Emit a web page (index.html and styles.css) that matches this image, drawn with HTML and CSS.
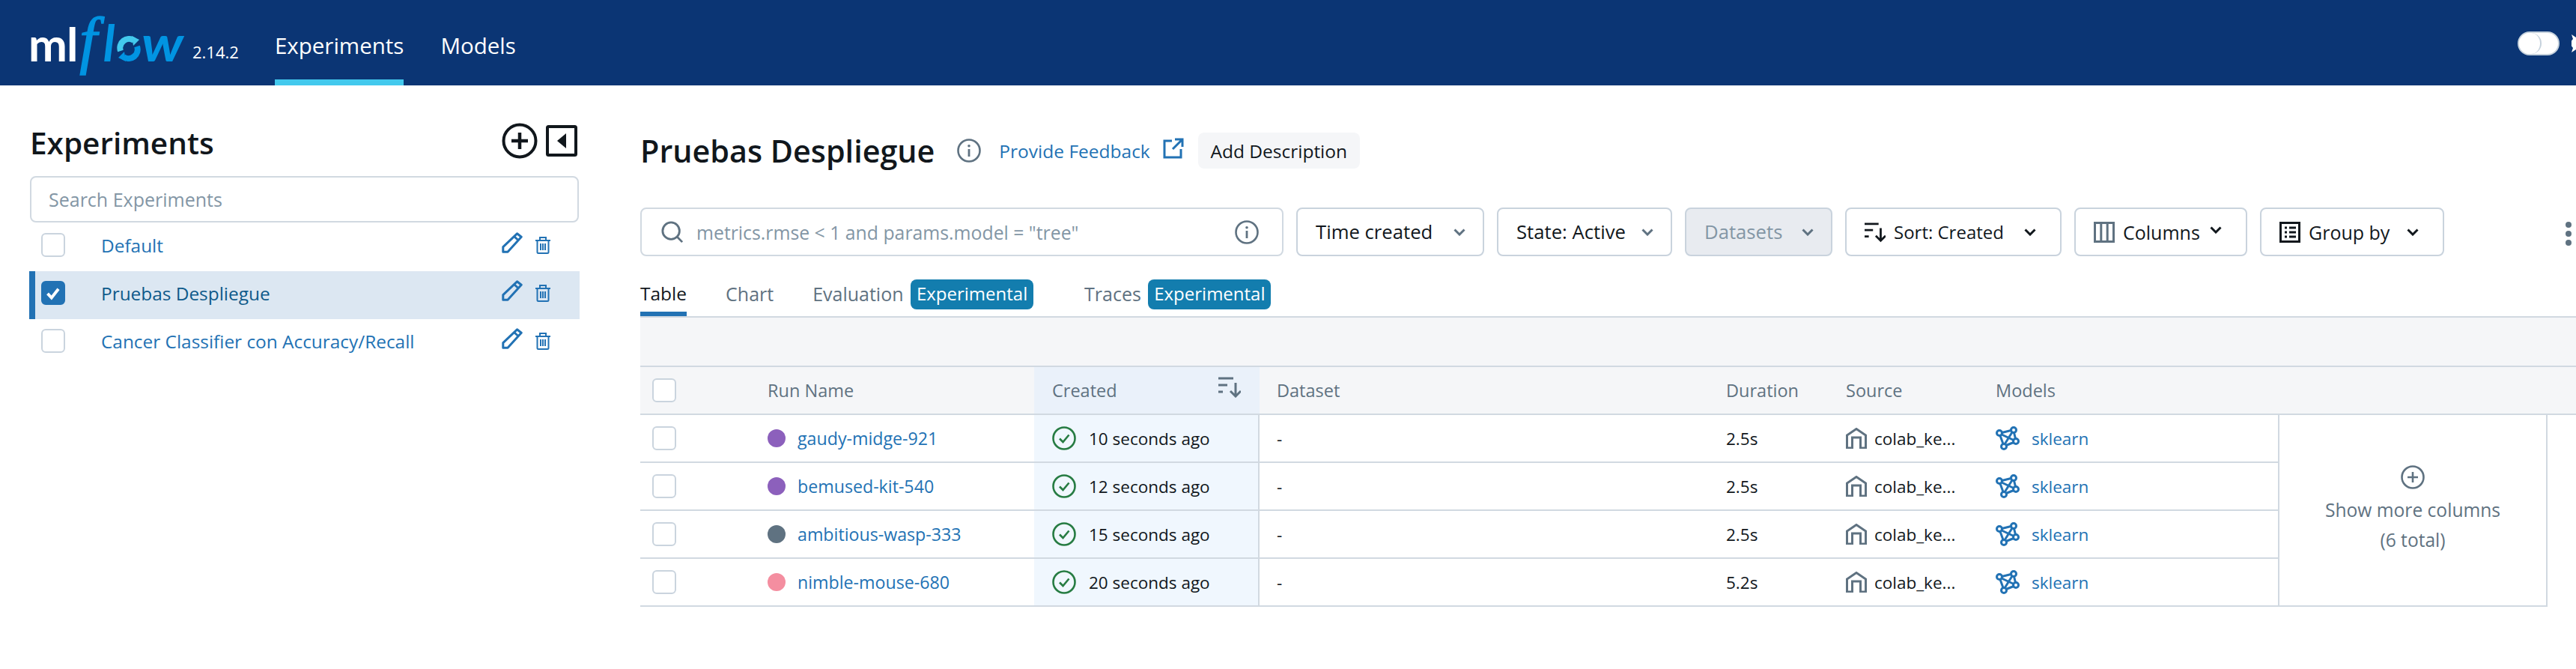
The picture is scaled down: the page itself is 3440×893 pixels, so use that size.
FILE: index.html
```html
<!DOCTYPE html>
<html lang="en">
<head>
  <meta charset="UTF-8">
  <title>MLflow Experiments</title>
  <link rel="stylesheet" href="styles.css">
</head>
<body>
  <svg class="defs" width="0" height="0">
    <defs>
      <symbol id="i-pencil" viewBox="0 0 28 28"><path d="M1.800 26.200v-6.500L20.500 1.800l5.700 4.500L8 26.200zM17 6l6 5.500" fill="none" stroke="currentColor" stroke-width="3" stroke-linejoin="round"/></symbol>
      <symbol id="i-trash" viewBox="0 0 22 24"><path d="M1 6h20M7 6V2h8v4M3.500 6v15.500a1.500 1.500 0 0 0 1.500 1.500h12a1.500 1.500 0 0 0 1.500-1.500V6M8 10v9M11 10v9M14 10v9" fill="none" stroke="currentColor" stroke-width="2"/></symbol>
      <symbol id="i-info" viewBox="0 0 32 32"><circle cx="16" cy="16" r="14.500" fill="none" stroke="currentColor" stroke-width="2.600"/><circle cx="16" cy="9.800" r="1.800" fill="currentColor"/><path d="M16 14v10" stroke="currentColor" stroke-width="2.800"/></symbol>
      <symbol id="i-chev" viewBox="0 0 16 10"><path d="M1.500 1.500 8 8l6.500-6.500" fill="none" stroke="currentColor" stroke-width="3"/></symbol>
      <symbol id="i-sort" viewBox="0 0 30 28"><path d="M0 2h20M0 11h12M0 20h6M23 8v18M16 19l7 7 7-7" fill="none" stroke="currentColor" stroke-width="3"/></symbol>
      <symbol id="i-ok" viewBox="0 0 32 32"><circle cx="16" cy="16" r="14.500" fill="none" stroke="#277c43" stroke-width="2.600"/><path d="M10 16.500l4.500 4.500 8-9.500" fill="none" stroke="#277c43" stroke-width="2.600"/></symbol>
      <symbol id="i-home" viewBox="0 0 28 28"><path d="M1.500 27V10L14 1.500 26.500 10v17h-7V13h-11v14z" fill="none" stroke="currentColor" stroke-width="3"/></symbol>
      <symbol id="i-model" viewBox="0 0 32 32"><g fill="none" stroke="currentColor" stroke-width="3"><circle cx="5" cy="9" r="3.500"/><circle cx="24" cy="5" r="3.500"/><circle cx="27" cy="20" r="3.500"/><circle cx="11" cy="27" r="3.500"/><path d="M8.500 8.500l12-3M8 11l16 7.500M6 12.500l4 11M24.500 8.500l2 8M14 25.500l10-4M22 8 12 24"/></g></symbol>
    </defs>
  </svg>

  <header class="topbar">
    <div class="logo">
      <span class="logo-ml">ml</span><span class="logo-f">f</span><span class="logo-l">l</span>
      <svg class="logo-o" viewBox="0 0 34 34"><path d="M6 20A12 12 0 0 1 24 6" fill="none" stroke="#43c9ed" stroke-width="8"/><path d="M28 14A12 12 0 0 1 10 28" fill="none" stroke="#0194e2" stroke-width="8"/><path d="M21 0l10 5-8 8z" fill="#43c9ed"/><path d="M13 34 3 29l8-8z" fill="#0194e2"/></svg>
      <span class="logo-w">w</span>
    </div>
    <span class="version">2.14.2</span>
    <nav class="topnav">
      <a class="topnav-item active">Experiments</a>
      <a class="topnav-item">Models</a>
    </nav>
    <div class="theme-toggle"><span class="knob"></span></div>
    <svg class="sun" viewBox="0 0 24 24"><path d="M0 0l6 4 6-4 1 6 7 0-3 6 3 6-7 0-1 6-6-4-6 4 2-6-5-6 5-6z" fill="#fff"/></svg>
  </header>

  <div class="page">
    <aside class="sidebar">
      <div class="sidebar-head">
        <h2>Experiments</h2>
        <svg class="icon-add" viewBox="0 0 48 48"><circle cx="24" cy="24" r="21.500" fill="none" stroke="currentColor" stroke-width="4"/><path d="M24 13v22M13 24h22" stroke="currentColor" stroke-width="4.500"/></svg>
        <svg class="icon-collapse" viewBox="0 0 42 42"><rect x="2" y="2" width="38" height="38" rx="1.500" fill="none" stroke="currentColor" stroke-width="4"/><path d="M27 11v20L15 21z" fill="currentColor"/></svg>
      </div>
      <div class="exp-search">Search Experiments</div>
      <ul class="exp-list">
        <li class="exp-row">
          <span class="checkbox"></span>
          <span class="exp-name">Default</span>
          <svg class="icon-pencil"><use href="#i-pencil"/></svg>
          <svg class="icon-trash"><use href="#i-trash"/></svg>
        </li>
        <li class="exp-row selected">
          <span class="checkbox checked"><svg viewBox="0 0 32 32"><path d="M7.500 17l6 6.500L24 10" fill="none" stroke="#fff" stroke-width="4.500"/></svg></span>
          <span class="exp-name">Pruebas Despliegue</span>
          <svg class="icon-pencil"><use href="#i-pencil"/></svg>
          <svg class="icon-trash"><use href="#i-trash"/></svg>
        </li>
        <li class="exp-row">
          <span class="checkbox"></span>
          <span class="exp-name">Cancer Classifier con Accuracy/Recall</span>
          <svg class="icon-pencil"><use href="#i-pencil"/></svg>
          <svg class="icon-trash"><use href="#i-trash"/></svg>
        </li>
      </ul>
    </aside>

    <main class="main">
      <div class="title-row">
        <h1>Pruebas Despliegue</h1>
        <svg class="icon-info title-info"><use href="#i-info"/></svg>
        <a class="feedback">Provide Feedback</a>
        <svg class="icon-ext" viewBox="0 0 28 28"><path d="M12 4H2v22h22V15M16 2h10v10M26 2 13 15" fill="none" stroke="currentColor" stroke-width="3"/></svg>
        <button class="add-desc">Add Description</button>
      </div>

      <div class="toolbar">
        <div class="run-search">
          <svg class="icon-search" viewBox="0 0 32 32"><circle cx="14" cy="14" r="12" fill="none" stroke="currentColor" stroke-width="3"/><path d="M22.500 22.500 30 30" stroke="currentColor" stroke-width="3"/></svg>
          <span class="run-search-text">metrics.rmse &lt; 1 and params.model = "tree"</span>
          <svg class="icon-info"><use href="#i-info"/></svg>
        </div>
        <button class="tool-btn btn-time">Time created<svg class="icon-chev gray"><use href="#i-chev"/></svg></button>
        <button class="tool-btn btn-state">State: Active<svg class="icon-chev gray"><use href="#i-chev"/></svg></button>
        <button class="tool-btn btn-datasets" disabled>Datasets<svg class="icon-chev gray"><use href="#i-chev"/></svg></button>
        <button class="tool-btn btn-sort"><svg class="icon-btn"><use href="#i-sort"/></svg>Sort: Created<svg class="icon-chev"><use href="#i-chev"/></svg></button>
        <button class="tool-btn btn-columns">
          <svg class="icon-btn gray" viewBox="0 0 28 28"><path d="M1.500 1.500h25v25h-25zM9.800 1.500v25M18.200 1.500v25" fill="none" stroke="currentColor" stroke-width="3"/></svg>Columns<svg class="icon-chev"><use href="#i-chev"/></svg>
        </button>
        <button class="tool-btn btn-group">
          <svg class="icon-btn" viewBox="0 0 28 28"><path d="M1.500 1.500h25v25h-25z" fill="none" stroke="currentColor" stroke-width="3"/><path d="M7 8h3M13 8h9M7 14h3M13 14h9M7 20h3M13 20h9" stroke="currentColor" stroke-width="3"/></svg>Group by<svg class="icon-chev"><use href="#i-chev"/></svg>
        </button>
        <div class="kebab"><span></span><span></span><span></span></div>
      </div>

      <div class="tabs">
        <a class="tab active">Table</a>
        <a class="tab">Chart</a>
        <a class="tab">Evaluation <span class="badge">Experimental</span></a>
        <a class="tab">Traces <span class="badge">Experimental</span></a>
      </div>

      <div class="band"></div>

      <div class="table-head">
        <div class="cell col-check"><span class="checkbox"></span></div>
        <div class="cell col-name">Run Name</div>
        <div class="cell col-created">Created<svg class="icon-sort-head"><use href="#i-sort"/></svg></div>
        <div class="cell col-data">Dataset</div>
        <div class="cell col-dur">Duration</div>
        <div class="cell col-src">Source</div>
        <div class="cell col-model">Models</div>
      </div>

      <div class="table-body">
        <div class="rows">
          <div class="run-row">
            <div class="cell col-check"><span class="checkbox"></span></div>
            <div class="cell col-name"><span class="dot purple"></span><a>gaudy-midge-921</a></div>
            <div class="cell col-created"><svg class="icon-ok"><use href="#i-ok"/></svg>10 seconds ago</div>
            <div class="cell col-data">-</div>
            <div class="cell col-dur">2.5s</div>
            <div class="cell col-src"><svg class="icon-home"><use href="#i-home"/></svg>colab_ke...</div>
            <div class="cell col-model"><svg class="icon-model"><use href="#i-model"/></svg><a>sklearn</a></div>
          </div>
          <div class="run-row">
            <div class="cell col-check"><span class="checkbox"></span></div>
            <div class="cell col-name"><span class="dot purple"></span><a>bemused-kit-540</a></div>
            <div class="cell col-created"><svg class="icon-ok"><use href="#i-ok"/></svg>12 seconds ago</div>
            <div class="cell col-data">-</div>
            <div class="cell col-dur">2.5s</div>
            <div class="cell col-src"><svg class="icon-home"><use href="#i-home"/></svg>colab_ke...</div>
            <div class="cell col-model"><svg class="icon-model"><use href="#i-model"/></svg><a>sklearn</a></div>
          </div>
          <div class="run-row">
            <div class="cell col-check"><span class="checkbox"></span></div>
            <div class="cell col-name"><span class="dot slate"></span><a>ambitious-wasp-333</a></div>
            <div class="cell col-created"><svg class="icon-ok"><use href="#i-ok"/></svg>15 seconds ago</div>
            <div class="cell col-data">-</div>
            <div class="cell col-dur">2.5s</div>
            <div class="cell col-src"><svg class="icon-home"><use href="#i-home"/></svg>colab_ke...</div>
            <div class="cell col-model"><svg class="icon-model"><use href="#i-model"/></svg><a>sklearn</a></div>
          </div>
          <div class="run-row">
            <div class="cell col-check"><span class="checkbox"></span></div>
            <div class="cell col-name"><span class="dot pink"></span><a>nimble-mouse-680</a></div>
            <div class="cell col-created"><svg class="icon-ok"><use href="#i-ok"/></svg>20 seconds ago</div>
            <div class="cell col-data">-</div>
            <div class="cell col-dur">5.2s</div>
            <div class="cell col-src"><svg class="icon-home"><use href="#i-home"/></svg>colab_ke...</div>
            <div class="cell col-model"><svg class="icon-model"><use href="#i-model"/></svg><a>sklearn</a></div>
          </div>
        </div>
        <div class="show-more">
          <svg class="icon-more" viewBox="0 0 32 32"><circle cx="16" cy="16" r="14.500" fill="none" stroke="currentColor" stroke-width="2.600"/><path d="M16 9v14M9 16h14" stroke="currentColor" stroke-width="2.600"/></svg>
          <div>Show more columns</div>
          <div>(6 total)</div>
        </div>
      </div>
    </main>
  </div>
</body>
</html>
```

FILE: styles.css
```css
:root {
  --navy: #0b3574;
  --link: #2272b4;
  --text: #11171c;
  --muted: #5f7281;
  --hint: #8396a5;
  --line: #d1d9e1;
  --soft: #f5f6f8;
}

* {
  box-sizing: border-box;
}

html, body {
  margin: 0;
  height: 100%;
  overflow: hidden;
}

body {
  font-family: "Open Sans", "Noto Sans", sans-serif;
  font-size: 22.5px;
  color: var(--text);
  background: #fff;
}

.defs {
  display: block;
  height: 0;
}

button {
  font: inherit;
  color: inherit;
}

/* top bar */
.topbar {
  display: flex;
  align-items: flex-start;
  height: 114px;
  background: var(--navy);
  color: #fff;
  padding-left: 38px;
}

.logo {
  display: flex;
  align-items: baseline;
  width: 210px;
  height: 114px;
  padding-top: 8px;
}

.logo span {
  line-height: 1.1;
}

.logo-ml {
  font-family: Lato, sans-serif;
  font-size: 62px;
  font-weight: 700;
  color: #fff;
  letter-spacing: -1px;
}

.logo-f, .logo-l, .logo-w {
  color: #0194e2;
  font-style: italic;
}

.logo-f {
  font-family: "Liberation Serif", serif;
  font-size: 84px;
  margin-left: 3px;
  -webkit-text-stroke: 1.5px #0194e2;
}

.logo-l {
  font-family: Lato, sans-serif;
  font-weight: 700;
  font-size: 66px;
  margin-left: 8px;
}

.logo-o {
  width: 34px;
  height: 34px;
  margin-left: 2px;
}

.logo-w {
  font-family: Lato, sans-serif;
  font-weight: 700;
  font-size: 66px;
  transform: scaleX(1.15);
  transform-origin: left;
}

.version {
  font-size: 22px;
  margin-left: 9px;
  padding-top: 54px;
}

.topnav {
  display: flex;
  gap: 49px;
  margin-left: 48px;
}

.topnav-item {
  display: block;
  height: 114px;
  padding-top: 39px;
  font-size: 29.5px;
  line-height: 44px;
  border-bottom: 8px solid transparent;
}

.topnav-item.active {
  border-bottom-color: #43c9ed;
}

.theme-toggle {
  width: 56px;
  height: 32px;
  margin: 42px 0 0 auto;
  border-radius: 16px;
  background: #fff;
  border: 2px solid #c5d1dc;
}

.knob {
  display: block;
  width: 30px;
  height: 28px;
  border-radius: 15px;
  background: #fff;
  border-right: 2px solid #c5d1dc;
}

.sun {
  width: 24px;
  height: 24px;
  flex: none;
  margin: 46px -18px 0 16px;
}

/* sidebar */
.page {
  display: flex;
}

.sidebar {
  width: 855px;
  flex: none;
  padding: 50px 81px 0 39px;
}

.sidebar-head {
  display: flex;
  align-items: center;
  height: 48px;
  padding-left: 1px;
  margin-bottom: 23px;
}

.sidebar-head h2 {
  margin: 0;
  padding-top: 4px;
  font-size: 40.5px;
  font-weight: 600;
  margin-right: auto;
}

.icon-add {
  width: 48px;
  height: 48px;
  margin-right: 11px;
}

.icon-collapse {
  width: 42px;
  height: 42px;
  margin-right: 3px;
}

.exp-search {
  margin-left: 1px;
  margin-right: 1px;
  height: 62px;
  border: 2px solid var(--line);
  border-radius: 8px;
  padding: 0 23px;
  font-size: 25px;
  line-height: 58px;
  color: var(--hint);
}

.exp-list {
  list-style: none;
  margin: 1px 0 0;
  padding: 0;
}

.exp-row {
  display: flex;
  align-items: center;
  height: 64px;
  padding: 0 0 6px 16px;
  color: var(--link);
  font-size: 24.4px;
}

.exp-row.selected {
  background: #dce7f2;
  border-left: 8px solid var(--link);
  padding-left: 8px;
}

.exp-row.selected .exp-name {
  color: #0e5a8a;
}

.checkbox {
  display: block;
  flex: none;
  width: 32px;
  height: 32px;
  border: 2px solid #cad4de;
  border-radius: 6px;
  background: #fff;
}

.checkbox.checked {
  background: var(--link);
  border-color: var(--link);
}

.checkbox.checked svg {
  display: block;
  width: 28px;
  height: 28px;
}

.exp-name {
  margin-left: 48px;
  margin-right: auto;
}

.icon-pencil {
  width: 28px;
  height: 28px;
  margin-top: -6px;
}

.icon-trash {
  width: 22px;
  height: 24px;
  margin: 0 38px 0 16px;
}

/* main */
.main {
  flex: 1;
  min-width: 0;
  padding-top: 63px;
}

.title-row {
  display: flex;
  align-items: center;
  height: 48px;
  margin-bottom: 52px;
  font-size: 24.5px;
}

.title-row h1 {
  margin: 0;
  font-size: 41.3px;
  font-weight: 600;
}

.icon-info {
  width: 32px;
  height: 32px;
  color: var(--muted);
  flex: none;
}

.title-info {
  margin-left: 30px;
}

.feedback {
  margin-left: 24px;
  color: var(--link);
}

.icon-ext {
  width: 28px;
  height: 28px;
  margin: -6px 0 0 17px;
  color: var(--link);
}

.add-desc {
  margin-left: 19px;
  height: 48px;
  width: 216px;
  border: none;
  border-radius: 8px;
  background: var(--soft);
  padding: 0;
}

.toolbar {
  display: flex;
  gap: 17px;
  height: 65px;
  font-size: 25px;
}

.run-search {
  display: flex;
  align-items: center;
  width: 859px;
  border: 2px solid var(--line);
  border-radius: 8px;
  padding: 0 31px 0 26px;
  font-size: 24.8px;
  color: var(--hint);
}

.icon-search {
  width: 30px;
  height: 32px;
  margin-right: 17px;
  color: var(--muted);
  flex: none;
}

.run-search-text {
  margin-right: auto;
}

.tool-btn {
  display: flex;
  align-items: center;
  gap: 11px;
  flex: none;
  border: 2px solid #c9d3dd;
  border-radius: 8px;
  background: #fff;
  padding: 0 23px 0 24px;
  font-size: 25.7px;
}

.btn-time { width: 251px; }
.btn-state { width: 234px; }
.btn-datasets { width: 197px; background: #e8ebf0; color: var(--hint); }
.btn-sort { width: 289px; padding-right: 32px; font-size: 24px; }
.btn-columns { width: 231px; padding-right: 32px; font-size: 25px; }
.btn-group { width: 246px; padding-right: 32px; font-size: 25px; }

.icon-chev {
  width: 16px;
  height: 10px;
  flex: none;
  margin-left: auto;
}

.btn-columns .icon-chev {
  margin-top: -6px;
}

.gray {
  color: var(--muted);
}

.icon-btn {
  width: 28px;
  height: 28px;
  flex: none;
}

.kebab {
  display: flex;
  flex-direction: column;
  gap: 4px;
  margin: 19px 6px 0 auto;
}

.kebab span {
  display: block;
  width: 8px;
  height: 8px;
  border-radius: 50%;
  background: var(--muted);
}

.tabs {
  display: flex;
  gap: 52px;
  height: 82px;
  padding-top: 28px;
  border-bottom: 2px solid var(--line);
  font-size: 25px;
  color: var(--muted);
}

.tab {
  display: block;
  height: 52px;
  line-height: 44px;
  white-space: nowrap;
}

.tab.active {
  color: var(--text);
  font-weight: 500;
  font-size: 24.5px;
  border-bottom: 6px solid var(--link);
}

.tab + .tab + .tab + .tab {
  margin-left: 16px;
}

.badge {
  display: inline-block;
  height: 40px;
  line-height: 38px;
  width: 164px;
  margin-left: 3px;
  text-align: center;
  font-size: 24px;
  background: #137dae;
  color: #fff;
  border-radius: 8px;
  vertical-align: 1px;
}

.band {
  height: 66px;
  background: var(--soft);
  border-bottom: 2px solid var(--line);
}

/* runs table */
.table-head, .run-row {
  display: flex;
  height: 64px;
}

.table-head {
  background: var(--soft);
  border-bottom: 2px solid var(--line);
  color: var(--muted);
  font-size: 23.5px;
}

.cell {
  display: flex;
  align-items: center;
  flex: none;
  padding-left: 16px;
  white-space: nowrap;
}

.col-check { width: 154px; }
.col-name { width: 372px; }
.col-created { width: 301px; padding-left: 24px; }
.col-data { width: 607px; padding-left: 23px; }
.col-dur { width: 160px; }
.col-src { width: 200px; }
.col-model { width: 393px; }

.table-head .col-created {
  background: #eaf1fa;
  justify-content: space-between;
  padding-right: 25px;
}

.icon-sort-head {
  width: 30px;
  height: 28px;
  margin-top: -8px;
  color: var(--muted);
}

.table-body {
  display: flex;
}

.rows {
  width: 2187px;
  flex: none;
}

.run-row {
  border-bottom: 2px solid var(--line);
}

.run-row .col-created {
  background: #f0f7fe;
  border-right: 2px solid var(--line);
}

.run-row a {
  color: var(--link);
}

.run-row .col-name a {
  font-size: 23.2px;
}

.dot {
  display: block;
  width: 24px;
  height: 24px;
  border-radius: 50%;
  margin-right: 16px;
}

.purple { background: #8c60bc; }
.slate { background: #5f7281; }
.pink { background: #f48ea0; }

.icon-ok {
  width: 32px;
  height: 32px;
  margin-right: 17px;
}

.icon-home {
  width: 28px;
  height: 28px;
  margin-right: 10px;
  color: var(--muted);
}

.icon-model {
  width: 32px;
  height: 32px;
  margin-right: 16px;
  color: var(--link);
}

.show-more {
  display: flex;
  flex-direction: column;
  align-items: center;
  justify-content: center;
  width: 360px;
  height: 256px;
  font-size: 24.6px;
  line-height: 40px;
  color: var(--muted);
  border-left: 2px solid var(--line);
  border-right: 2px solid var(--line);
  border-bottom: 2px solid var(--line);
}

.icon-more {
  width: 32px;
  height: 32px;
  margin-bottom: 8px;
}
```
